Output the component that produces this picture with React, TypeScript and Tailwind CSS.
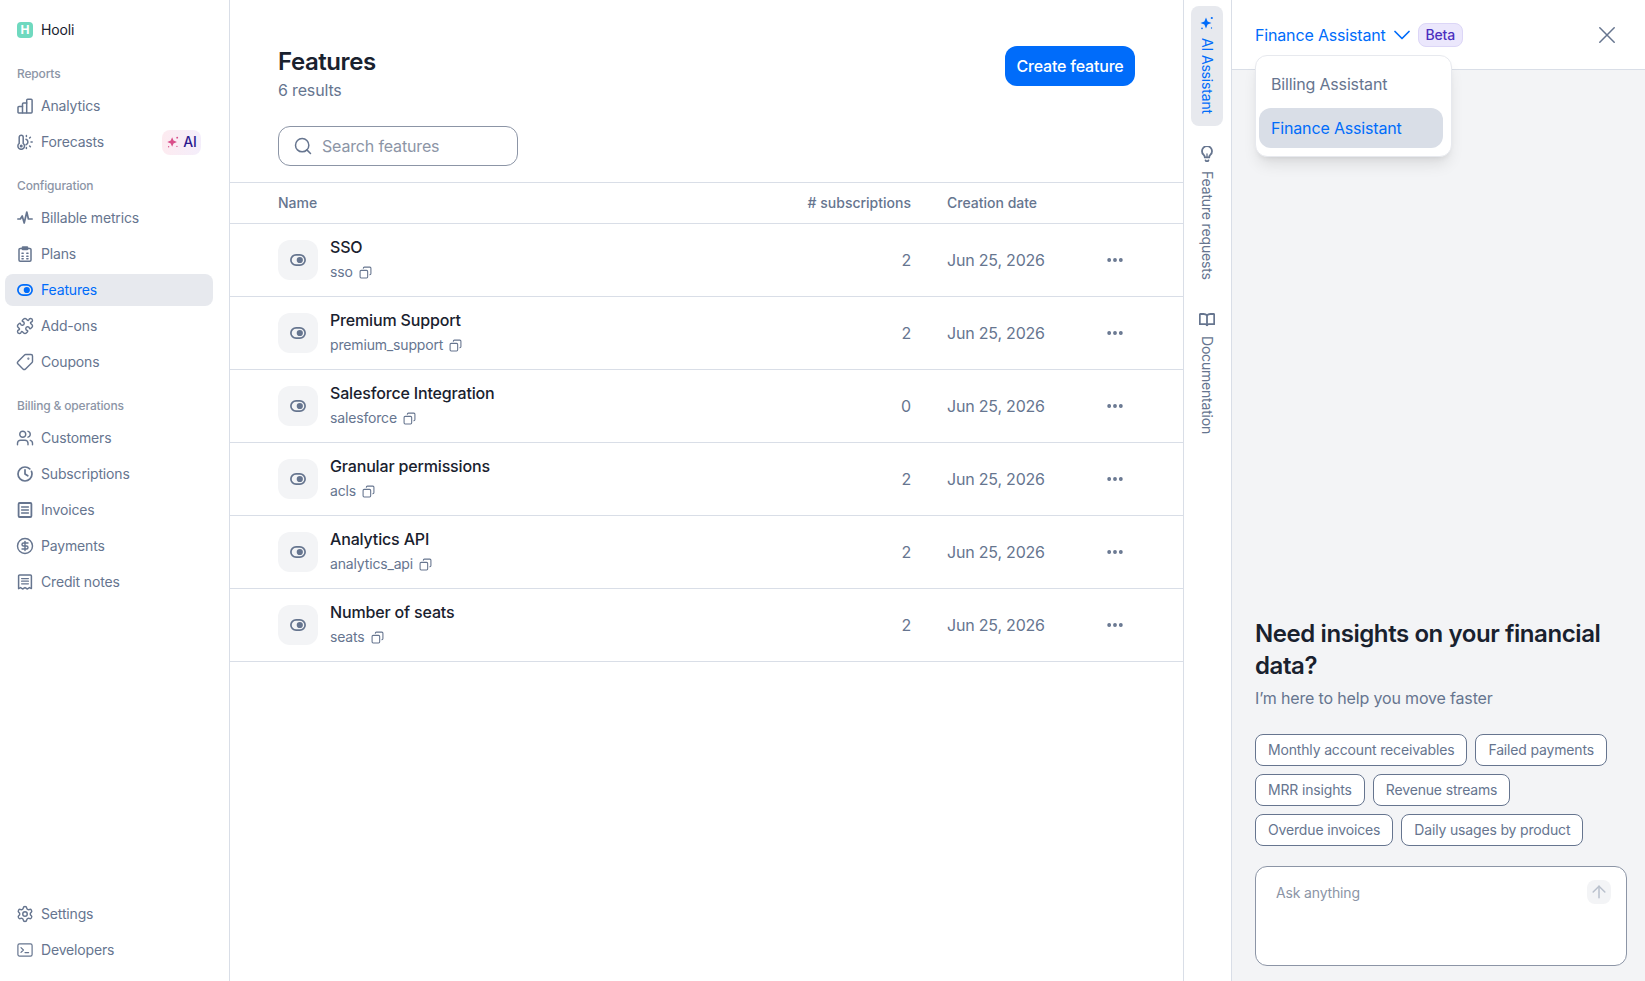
import { ArrowUp, Copy, Search, Settings, MoreHorizontal, Users, Puzzle, Tag, CircleDollarSign } from 'lucide-react';
import type { ReactNode } from 'react';

const Svg = ({ children, className = 'w-4 h-4' }: { children: ReactNode; className?: string }) => (
  <svg viewBox="0 0 16 16" fill="none" stroke="currentColor" strokeWidth="1.5" strokeLinecap="round" strokeLinejoin="round" className={className}>
    {children}
  </svg>
);

const AnalyticsIcon = () => (
  <Svg>
    <path d="M1 14.2V9.5a1 1 0 0 1 1-1h3.5V6a1 1 0 0 1 1-1h3.2V2.2a1 1 0 0 1 1-1h3.4a1 1 0 0 1 1 1V14a.9.9 0 0 1-.9.9H1.7a.7.7 0 0 1-.7-.7z" />
    <path d="M5.5 8.5v6.2M9.7 5v9.7" />
  </Svg>
);

const ForecastIcon = () => (
  <Svg>
    <path d="M4.2 1.2a2 2 0 0 1 2 2v6.200a3.300 3.300 0 1 1-4 0V3.200a2 2 0 0 1 2-2z" />
    <circle cx="4.200" cy="12" r=".8" fill="currentColor" />
    <path d="M9 5.200a3 3 0 0 1 0 5.600" />
    <path d="M9.400 1.500v1M13.400 3.200l-.8.8M15.200 8h-1.200M13.400 12.800l-.8-.8M9.400 14.500v-1" />
  </Svg>
);

const PulseIcon = () => (
  <Svg>
    <path d="M.8 9h2.6l1.8-3 2 7 2.6-11 1.6 7h3.8" strokeWidth="1.7" />
  </Svg>
);

const PlansIcon = () => (
  <Svg>
    <rect x="2" y="2.4" width="12" height="12.8" rx="1.2" />
    <rect x="5.4" y=".9" width="5.2" height="2.6" rx=".6" fill="currentColor" />
    <path d="M5 7.2h1.2M9.800 7.2H11M5 10.2h1.2M9.800 10.2H11M5 12.8h1.2M9.800 12.8H11" strokeWidth="1.5" />
  </Svg>
);

const EyeIcon = ({ className = 'w-4 h-4' }: { className?: string }) => (
  <svg viewBox="0 0 16 16" className={className} fill="none">
    <rect x=".9" y="2.8" width="14.2" height="10.4" rx="5.2" stroke="currentColor" strokeWidth="1.7" />
    <circle cx="9.800" cy="8" r="3.100" fill="currentColor" />
  </svg>
);

const InvoiceIcon = () => (
  <Svg>
    <rect x="1.6" y="1" width="12.8" height="14" rx="1" strokeWidth="1.8" />
    <path d="M4.6 5h6.8M4.6 8h6.8M4.6 11h6.8" strokeWidth="1.5" />
  </Svg>
);

const ClockIcon = () => (
  <Svg>
    <circle cx="8" cy="8" r="7" strokeWidth="1.7" strokeDasharray="38 3" />
    <path d="M8 3.800V8l2.800 1.800" strokeWidth="1.7" />
  </Svg>
);

const ReceiptIcon = () => (
  <Svg>
    <path d="M1.6 2a1 1 0 0 1 1-1h10.800a1 1 0 0 1 1 1v12.600l-2-1-2 1.400-2.400-1.400-2.400 1.400-2-1.400-2 1z" />
    <path d="M4.6 4.600h6.800M4.6 7.200h6.800M4.6 9.800h6.800" strokeWidth="1.3" />
  </Svg>
);

const TerminalIcon = () => (
  <Svg>
    <rect x=".9" y="1.9" width="14.2" height="12.2" rx="1.6" strokeWidth="1.2" />
    <path d="M4 5.600 6.400 8 4 10.400M8 10.600h3.600" strokeWidth="1.2" />
  </Svg>
);

const BookIcon = () => (
  <Svg>
    <path d="M8 3.400C7.200 2.500 6 2 4.600 2H1.400a.6.6 0 0 0-.6.6v9.600h5.400c.8 0 1.400.4 1.800 1 .4-.6 1-1 1.800-1h5.400V2.600a.6.6 0 0 0-.6-.6h-3.200C10 2 8.800 2.500 8 3.400z" strokeWidth="1.8" />
    <path d="M8 3.400v9.800" strokeWidth="1.8" />
  </Svg>
);

const BulbIcon = () => (
  <Svg>
    <path d="M5.800 11.400c0-1.300-.5-1.900-1.300-2.700a5 5 0 1 1 7 0c-.8.8-1.300 1.400-1.300 2.700z" strokeWidth="1.8" />
    <path d="M6.600 14.400a1.500 1.500 0 0 0 2.800 0" strokeWidth="1.8" />
    <path d="M8 11.200V8" strokeWidth="1.300" />
  </Svg>
);

const SparkIcon = ({ className }: { className: string }) => (
  <svg viewBox="0 0 16 16" className={className} fill="currentColor">
    <path d="M7 2.500 8.600 6.400 12.500 8 8.600 9.600 7 13.500 5.400 9.600 1.500 8 5.400 6.400z" />
    <circle cx="12.800" cy="3" r="1.100" />
    <circle cx="3" cy="13.400" r=".8" />
    <circle cx="12.500" cy="13" r=".7" />
  </svg>
);

const NavItem = ({ icon, label, active, badge }: { icon: ReactNode; label: string; active?: boolean; badge?: boolean }) => (
  <a className={`flex items-center h-8 pl-3 rounded-lg text-sm ${active ? 'bg-[#e7e9ee] text-[#006cfa]' : 'text-[#66758f]'}`}>
    <span className="w-4 h-4 mr-2 shrink-0 flex items-center justify-center">{icon}</span>
    <span className="flex-1">{label}</span>
    {badge && (
      <span className="flex items-center gap-[3px] h-[25px] w-[39px] mr-3 justify-center rounded-lg bg-gradient-to-r from-[#fdebf0] to-[#f4eefb] text-sm font-medium text-[#2c1a8f]">
        <SparkIcon className="w-[14px] h-[14px] text-[#d94f8a]" />
        AI
      </span>
    )}
  </a>
);

const Group = ({ title, children }: { title: string; children: ReactNode }) => (
  <div className="mb-[18px]">
    <div className="h-5 leading-5 pl-3 mb-[6px] text-xs font-medium text-[#8c95a6]">{title}</div>
    <div className="flex flex-col gap-1">{children}</div>
  </div>
);

const features = [
  { name: 'SSO', code: 'sso', subs: 2 },
  { name: 'Premium Support', code: 'premium_support', subs: 2 },
  { name: 'Salesforce Integration', code: 'salesforce', subs: 0 },
  { name: 'Granular permissions', code: 'acls', subs: 2 },
  { name: 'Analytics API', code: 'analytics_api', subs: 2 },
  { name: 'Number of seats', code: 'seats', subs: 2 },
];

const prompts = [
  ['Monthly account receivables', 'Failed payments'],
  ['MRR insights', 'Revenue streams'],
  ['Overdue invoices', 'Daily usages by product'],
];

const lucideNav = 'w-[18px] h-[18px] shrink-0';

const Sidebar = () => (
  <aside className="w-[230px] shrink-0 border-r border-[#d9dee7] flex flex-col justify-between pl-[5px] pr-4 pb-[15px]">
    <div>
      <div className="h-[60px] mb-1 flex items-center pl-3 text-sm text-[#19212e]">
        <span className="w-4 h-4 mr-2 rounded bg-[#6fd9bf] text-white text-xs font-bold flex items-center justify-center">H</span>
        Hooli
      </div>
      <Group title="Reports">
        <NavItem icon={<AnalyticsIcon />} label="Analytics" />
        <NavItem icon={<ForecastIcon />} label="Forecasts" badge />
      </Group>
      <Group title="Configuration">
        <NavItem icon={<PulseIcon />} label="Billable metrics" />
        <NavItem icon={<PlansIcon />} label="Plans" />
        <NavItem icon={<EyeIcon />} label="Features" active />
        <NavItem icon={<Puzzle className={lucideNav} strokeWidth={1.9} />} label="Add-ons" />
        <NavItem icon={<Tag className={`${lucideNav} -scale-x-100`} strokeWidth={1.9} />} label="Coupons" />
      </Group>
      <Group title="Billing & operations">
        <NavItem icon={<Users className={lucideNav} strokeWidth={1.9} />} label="Customers" />
        <NavItem icon={<ClockIcon />} label="Subscriptions" />
        <NavItem icon={<InvoiceIcon />} label="Invoices" />
        <NavItem icon={<CircleDollarSign className={lucideNav} strokeWidth={1.9} />} label="Payments" />
        <NavItem icon={<ReceiptIcon />} label="Credit notes" />
      </Group>
    </div>
    <div className="flex flex-col gap-1">
      <NavItem icon={<Settings className={lucideNav} strokeWidth={1.9} />} label="Settings" />
      <NavItem icon={<TerminalIcon />} label="Developers" />
    </div>
  </aside>
);

const FeatureRow = ({ name, code, subs }: { name: string; code: string; subs: number }) => (
  <div className="flex items-center h-[73px] border-b border-[#d9dee7]">
    <div className="flex-1 pl-12 flex items-center gap-3">
      <span className="w-10 h-10 rounded-xl bg-[#f3f4f6] flex items-center justify-center text-[#66758f]">
        <EyeIcon />
      </span>
      <div className="h-11">
        <div className="-mt-[3px] mb-[3px] text-base leading-6 font-medium text-[#19212e]">{name}</div>
        <div className="flex items-center gap-[6px] text-sm leading-5 text-[#66758f]">
          {code}
          <Copy className="w-[13px] h-[13px] -scale-x-100" strokeWidth={2} />
        </div>
      </div>
    </div>
    <div className="w-[130px] text-right text-base text-[#66758f]">{subs}</div>
    <div className="w-[136px] ml-9 text-base tracking-[-0.2px] text-[#66758f]">Jun 25, 2026</div>
    <div className="w-16 mr-9 flex justify-center text-[#66758f]">
      <MoreHorizontal className="w-5 h-5" strokeWidth={2.6} />
    </div>
  </div>
);

const Main = () => (
  <main className="flex-1 min-w-0">
    <div className="px-12 pt-[46px] flex justify-between items-start">
      <div>
        <h1 className="text-2xl leading-8 font-semibold tracking-[-0.42px] text-[#19212e]">Features</h1>
        <p className="text-base leading-6 text-[#66758f]">6 results</p>
      </div>
      <button className="h-10 w-[130px] rounded-xl bg-[#006cfa] text-white text-base font-medium tracking-[-0.2px]">Create feature</button>
    </div>
    <div className="mx-12 mt-6 w-[240px] h-10 rounded-xl border border-[#8c95a6] flex items-center pl-[14px] text-base text-[#8c95a6]">
      <Search className="w-5 h-5 mr-[9px] text-[#66758f]" strokeWidth={1.8} />
      Search features
    </div>
    <div className="mt-4 flex items-center h-[42px] border-y border-[#d9dee7] text-sm font-medium tracking-normal text-[#66758f]">
      <div className="flex-1 pl-12">Name</div>
      <div className="w-[130px] text-right"># subscriptions</div>
      <div className="w-[136px] ml-9">Creation date</div>
      <div className="w-16 mr-9" />
    </div>
    {features.map((f) => (
      <FeatureRow key={f.code} {...f} />
    ))}
  </main>
);

const Rail = () => (
  <div className="w-[49px] shrink-0 border-x border-[#d9dee7] flex flex-col items-center pr-px pt-[6px] text-sm text-[#66758f]">
    <div className="w-8 h-[120px] rounded-lg bg-[#e7e9ee] text-[#006cfa] flex flex-col items-center pt-[9px]">
      <SparkIcon className="w-4 h-4" />
      <span className="mt-[7px] [writing-mode:vertical-rl]">AI Assistant</span>
    </div>
    <div className="mt-5 flex flex-col items-center">
      <BulbIcon />
      <span className="mt-[9px] [writing-mode:vertical-rl]">Feature requests</span>
    </div>
    <div className="mt-8 flex flex-col items-center">
      <BookIcon />
      <span className="mt-[8px] tracking-[-0.2px] [writing-mode:vertical-rl]">Documentation</span>
    </div>
  </div>
);

const Assistant = () => (
  <section className="w-[413px] shrink-0 flex flex-col bg-[#f3f4f6] relative">
    <header className="h-[70px] shrink-0 bg-white border-b border-[#d9dee7] flex items-center pl-[23px] pr-[30px]">
      <span className="text-base text-[#006cfa]">Finance Assistant</span>
      <svg viewBox="0 0 16 16" fill="none" stroke="currentColor" strokeWidth="1.7" strokeLinecap="round" strokeLinejoin="round" className="w-4 h-4 ml-2 text-[#006cfa]">
        <path d="M1 4.500 8 11.500 15 4.500" />
      </svg>
      <span className="ml-2 h-6 w-[45px] rounded-lg border border-[#dcd6f7] bg-[#ebe7fc] text-sm font-medium text-[#4b2fbf] flex items-center justify-center">Beta</span>
      <svg viewBox="0 0 16 16" fill="none" stroke="currentColor" strokeWidth="1.500" strokeLinecap="round" className="w-4 h-4 ml-auto text-[#66758f]">
        <path d="M.8 .8 15.200 15.200M15.200 .8 .8 15.200" />
      </svg>
    </header>
    <div className="absolute left-[23px] top-[55px] w-[197px] rounded-xl bg-white border border-[#e7e9ee] shadow-lg pl-[3px] pr-[8px] py-2 flex flex-col gap-1 text-base">
      <div className="h-10 flex items-center pl-3 text-[#66758f]">Billing Assistant</div>
      <div className="h-10 pl-3 flex items-center rounded-xl bg-[#d9dee7] text-[#006cfa]">Finance Assistant</div>
    </div>
    <div className="flex-1" />
    <div className="pl-[23px] pr-[18px] pb-[15px]">
      <h2 className="text-2xl leading-8 font-semibold tracking-[-0.42px] text-[#19212e]">Need insights on your financial data?</h2>
      <p className="mt-1 text-base leading-6 text-[#66758f]">I’m here to help you move faster</p>
      <div className="mt-6 flex flex-col gap-2">
        {prompts.map((line) => (
          <div key={line[0]} className="flex gap-2">
            {line.map((p) => (
              <span key={p} className="h-8 px-3 flex items-center rounded-lg border border-[#66758f] bg-white text-sm text-[#66758f]">{p}</span>
            ))}
          </div>
        ))}
      </div>
      <div className="relative mt-5 h-[100px] rounded-xl border border-[#8c95a6] bg-white pl-5 pt-4 text-sm leading-5 text-[#8c95a6]">
        Ask anything
        <span className="absolute right-[15px] top-[13px] w-6 h-6 rounded-lg bg-[#f3f4f6] flex items-center justify-center">
          <ArrowUp className="w-5 h-5 text-[#b9c0cc]" strokeWidth={1.8} />
        </span>
      </div>
    </div>
  </section>
);

export default function App() {
  return (
    <div className="flex h-screen w-full overflow-hidden bg-white tracking-[-0.16px] font-['Inter',sans-serif]">
      <Sidebar />
      <Main />
      <Rail />
      <Assistant />
    </div>
  );
}
